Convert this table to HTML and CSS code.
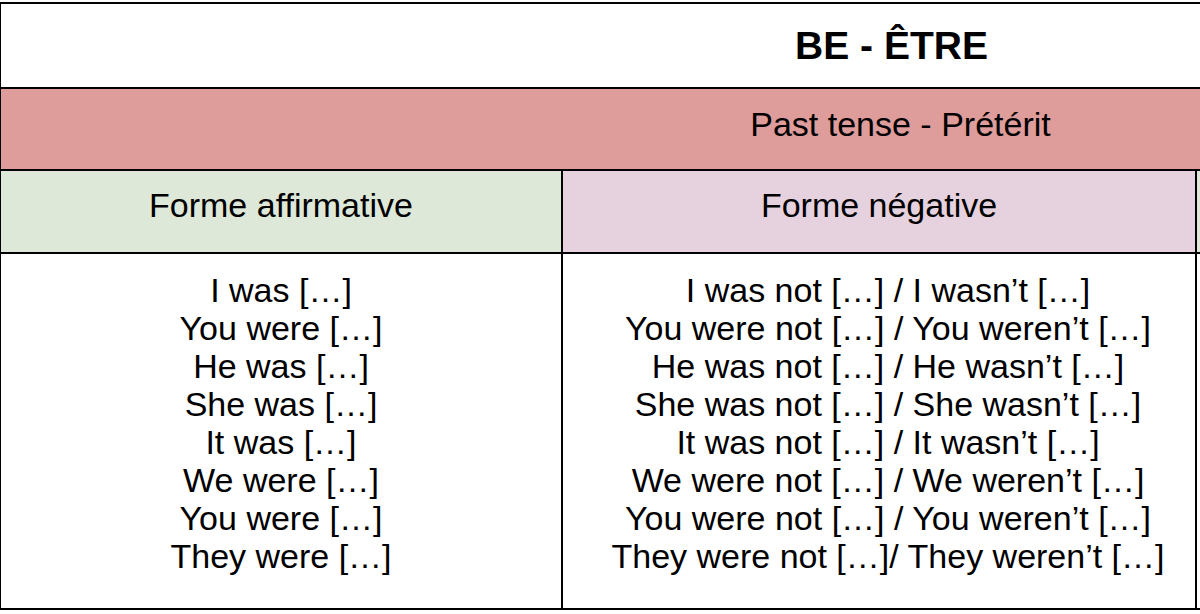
FILE: index.html
```html
<!DOCTYPE html>
<html lang="fr">
<head>
<meta charset="utf-8">
<title>BE - ÊTRE</title>
<link rel="stylesheet" href="styles.css">
</head>
<body>
<div class="sheet">
  <div class="cell title">BE - ÊTRE</div>
  <div class="cell tense">Past tense - Prétérit</div>
  <div class="cell head aff">Forme affirmative</div>
  <div class="cell head neg">Forme négative</div>
  <div class="cell head inter"></div>
  <div class="cell body">
    <div>I was […]</div>
    <div>You were […]</div>
    <div>He was […]</div>
    <div>She was […]</div>
    <div>It was […]</div>
    <div>We were […]</div>
    <div>You were […]</div>
    <div>They were […]</div>
  </div>
  <div class="cell body neg-body">
    <div>I was not […] / I wasn’t […]</div>
    <div>You were not […] / You weren’t […]</div>
    <div>He was not […] / He wasn’t […]</div>
    <div>She was not […] / She wasn’t […]</div>
    <div>It was not […] / It wasn’t […]</div>
    <div>We were not […] / We weren’t […]</div>
    <div>You were not […] / You weren’t […]</div>
    <div>They were not […]/ They weren’t […]</div>
  </div>
  <div class="cell body"></div>
</div>
</body>
</html>
```

FILE: styles.css
```css
html, body {
  margin: 0;
  padding: 0;
  background: #ffffff;
  overflow: hidden;
  width: 1200px;
  height: 614px;
}

body {
  font-family: "Liberation Sans", Arial, sans-serif;
  color: #000000;
}

.sheet {
  display: grid;
  grid-template-columns: 560px 632px 585px;
  grid-template-rows: 83px 80px 81px 354px;
  gap: 2px;
  padding: 2px;
  background: #000000;
  width: max-content;
  margin: 2px 0 0 -1px;
}

.cell {
  background: #ffffff;
  text-align: center;
  font-size: 34px;
  white-space: nowrap;
}

.title {
  grid-column: 1 / -1;
  display: flex;
  align-items: center;
  justify-content: center;
  font-weight: bold;
  font-size: 39px;
}

.tense {
  grid-column: 1 / -1;
  background: #de9c9b;
  padding: 16px 0 0 18px;
}

.head {
  padding-top: 15px;
}

.aff,
.inter {
  background: #dde8d8;
}

.neg {
  background: #e6d2de;
}

.body {
  padding-top: 17px;
  line-height: 38px;
}

.neg-body {
  padding-left: 18px;
}
```
